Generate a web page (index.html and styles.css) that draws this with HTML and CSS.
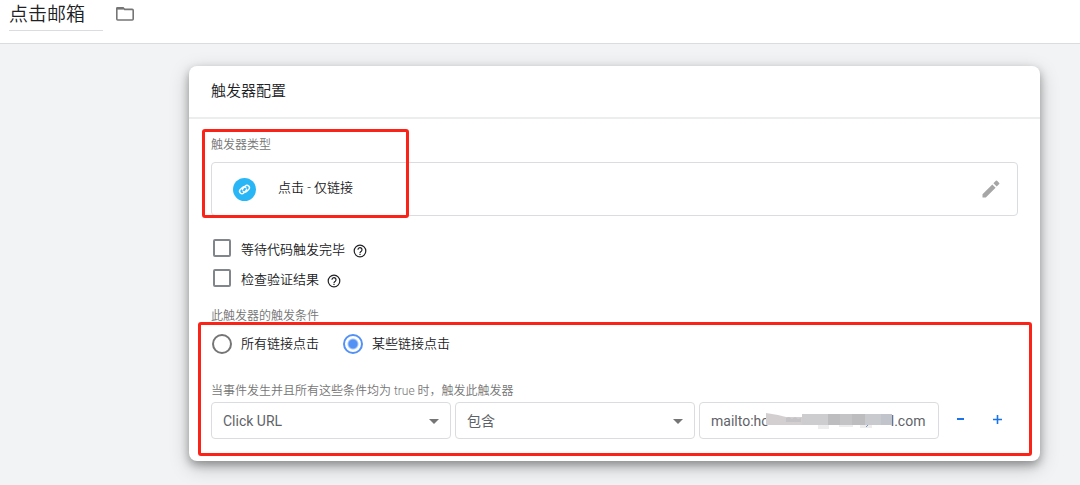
FILE: index.html
```html
<!DOCTYPE html>
<html lang="zh-CN">
<head>
<meta charset="utf-8">
<title>点击邮箱</title>
<link rel="stylesheet" href="styles.css">
</head>
<body>
<header class="topbar">
  <input class="name" type="text" value="点击邮箱" aria-label="触发器名称">
  <button class="icon-btn" type="button" aria-label="文件夹">
    <svg width="20" height="16" viewBox="0 0 20 16" fill="none" stroke="#757575" stroke-width="1.6"><path d="M1.8 2.2V13a1 1 0 0 0 1 1h14.4a1 1 0 0 0 1-1V4.4a1 1 0 0 0-1-1H9.6L8 1.7H2.3z"/><path d="M2 2.6h6.500" stroke-width="2"/></svg>
  </button>
</header>
<main class="stage">
  <section class="card">
    <h1 class="card-title">触发器配置</h1>
    <div class="card-body">
      <div class="type-block">
        <h2 class="caption">触发器类型</h2>
        <div class="type-box">
          <svg class="type-icon" width="23" height="23" viewBox="0 0 23 23"><circle cx="11.5" cy="11.5" r="11.5" fill="#29b6f6"/><g transform="translate(11.5 11.5) rotate(-45)" fill="none" stroke="#fff" stroke-width="1.4" stroke-linecap="round"><path d="M1.600 1.200A2.600 2.600 0 0 1 0 1.900h-3a2.400 2.400 0 0 1 0-4.800h3a2.400 2.400 0 0 1 2.300 2.400M-1.600-1.200A2.600 2.600 0 0 1 0-1.900h3a2.400 2.400 0 0 1 0 4.800H0a2.400 2.400 0 0 1-2.300-2.400"/></g></svg>
          <span class="type-name">点击 - 仅链接</span>
          <button class="icon-btn" type="button" aria-label="修改">
            <svg width="18" height="18" viewBox="0 0 18 18" fill="#a6a6a6"><path d="M.5 14.2v3.3h3.3L13.6 7.700l-3.300-3.300zM17.200 4.100a.9.900 0 0 0 0-1.200L15.100.8a.9.900 0 0 0-1.200 0L11.400 3.300l3.300 3.300z"/></svg>
          </button>
        </div>
        <div class="mark mark-type"></div>
      </div>
      <div class="checks">
        <div class="option">
          <input class="check" type="checkbox" id="wait"><label for="wait">等待代码触发完毕</label>
          <svg class="help" width="14" height="14" viewBox="0 0 14 14" fill="none" stroke="#202124" stroke-width="1.2"><circle cx="7" cy="7" r="5.8"/><path d="M5 5.700a2 2 0 1 1 3.300 1.500C7.500 7.800 7 8 7 8.900M7 9.800v1.200"/></svg>
        </div>
        <div class="option">
          <input class="check" type="checkbox" id="verify"><label for="verify">检查验证结果</label>
          <svg class="help" width="14" height="14" viewBox="0 0 14 14" fill="none" stroke="#202124" stroke-width="1.2"><circle cx="7" cy="7" r="5.8"/><path d="M5 5.700a2 2 0 1 1 3.300 1.500C7.500 7.800 7 8 7 8.900M7 9.800v1.200"/></svg>
        </div>
      </div>
      <h2 class="caption">此触发器的触发条件</h2>
      <div class="fire-block">
        <div class="radios">
          <div class="option"><input class="radio" type="radio" name="fire" id="all"><label for="all">所有链接点击</label></div>
          <div class="option"><input class="radio" type="radio" name="fire" id="some" checked><label for="some">某些链接点击</label></div>
        </div>
        <p class="caption">当事件发生并且所有这些条件均为 true 时，触发此触发器</p>
        <div class="condition">
          <div class="select-wrap"><select class="field" aria-label="变量"><option>Click URL</option></select></div>
          <div class="select-wrap"><select class="field" aria-label="运算符"><option>包含</option></select></div>
          <div class="value-wrap">
            <input class="field" type="text" aria-label="值" value="mailto:ho                                   l.com">
            <svg class="mosaic" width="132" height="18" viewBox="0 0 132 18">
              <path d="M0 0l12 2 8 2h16v8H0z" fill="#d3cfd1"/>
              <path d="M20 5l3-1 3 2 3-2 3 2 3-1v4H20z" fill="#c6c3c7"/>
              <path d="M36 1h26v11H36z" fill="#cdcdd0"/>
              <path d="M62 1h37v11H62z" fill="#bdbdc0"/>
              <path d="M74 1h12v11H74z" fill="#c4c4c6"/>
              <path d="M99 1h27v11H99z" fill="#c9cacd"/>
              <path d="M115 1h11v11h-11z" fill="#c1c4ca"/>
              <path d="M52 12h11v4H52zM73 12h14v2H73zM94 12h12v3H94z" fill="#ededee"/>
              <path d="M100 14l2-2" stroke="#7895bd"/>
            </svg>
          </div>
          <button class="step" type="button" aria-label="删除条件"><svg width="9" height="9" viewBox="0 0 9 9"><path d="M1 4h7" stroke="#1a73e8" stroke-width="2"/></svg></button>
          <button class="step" type="button" aria-label="添加条件"><svg width="9" height="9" viewBox="0 0 9 9"><path d="M0 4.500h9M4.500 0v9" stroke="#1a73e8" stroke-width="1.6"/></svg></button>
        </div>
        <div class="mark mark-fire"></div>
      </div>
    </div>
  </section>
</main>
</body>
</html>
```
FILE: styles.css
```css
* { box-sizing: border-box; }
body {
  margin: 0;
  min-height: 100vh;
  background: #f1f3f4;
  color: #202124;
  font-family: Roboto, "Noto Sans CJK SC", sans-serif;
  font-size: 13px;
  font-weight: 350;
}
h1, h2, p { margin: 0; font-weight: 350; }
input, select, button { font-family: inherit; color: inherit; margin: 0; }
svg { display: block; flex: none; }
.topbar {
  display: flex;
  align-items: flex-start;
  gap: 12px;
  height: 44px;
  padding: 0 9px;
  background: #fff;
  border-bottom: 1px solid #dadce0;
}
.name {
  width: 94px;
  height: 31px;
  padding: 0 0 5px;
  border: 0;
  border-bottom: 1px solid #dadce0;
  background: none;
  font-size: 19px;
  font-weight: 350;
}
.icon-btn { padding: 0; border: 0; background: none; cursor: pointer; }
.topbar .icon-btn { padding-top: 6px; }
.stage { padding: 22px 40px 24px 189px; }
.card {
  background: #fff;
  border-radius: 8px;
  box-shadow: 0 4px 8px rgba(0, 0, 0, .3), 0 6px 20px rgba(0, 0, 0, .22);
}
.card-title {
  height: 53px;
  padding: 0 22px;
  border-bottom: 2px solid #eceded;
  font-size: 15px;
  line-height: 50px;
}
.card-body { padding: 18px 22px 22px; }
.caption {
  color: #757575;
  font-size: 12px;
  line-height: 16px;
}
.type-block, .fire-block { position: relative; }
.type-box {
  display: flex;
  align-items: center;
  height: 54px;
  margin-top: 9px;
  padding: 0 17px 0 21px;
  border: 1px solid #dadce0;
  border-radius: 4px;
}
.type-name { flex: 1; margin-left: 22px; line-height: 20px; padding-bottom: 2px; }
.mark {
  position: absolute;
  border: 3px solid #fb2318;
  border-radius: 3px;
  pointer-events: none;
}
.mark-type { left: -9px; top: -8px; width: 207px; bottom: -2px; }
.mark-fire { left: -13px; right: -14px; top: -2px; bottom: -17px; }
.checks { margin: 17px 0 15px; }
.option { display: flex; align-items: center; height: 30px; }
.option label { line-height: 20px; padding-top: 4px; }
.radios .option label { padding-top: 0; }
.check {
  appearance: none;
  width: 18px;
  height: 18px;
  margin: 0 10px 0 2px;
  border: 2px solid #80868b;
  border-radius: 2px;
}
.help { margin: 5px 0 0 8px; }
.radios { display: flex; gap: 23px; padding-top: 5px; margin-bottom: 24px; }
.radio {
  appearance: none;
  width: 20px;
  height: 20px;
  margin: 0 9px 0 1px;
  border: 2px solid #757575;
  border-radius: 50%;
}
.radio:checked {
  border-color: #5491f5;
  background: radial-gradient(circle, #5491f5 4px, #fff 6px);
}
.condition {
  display: grid;
  grid-template-columns: 1fr 1fr 1fr 34px 32px;
  column-gap: 4px;
  align-items: center;
  margin-top: 3px;
  padding-right: 5px;
}
.select-wrap, .value-wrap { position: relative; }
.field {
  display: block;
  appearance: none;
  width: 100%;
  height: 37px;
  padding: 0 11px;
  border: 1px solid #dadce0;
  border-radius: 4px;
  background: #fff;
  color: #5f6368;
  font-size: 14px;
}
.value-wrap .field { padding-right: 4px; }
.select-wrap::after {
  content: "";
  position: absolute;
  right: 12px;
  top: 17px;
  border: 5px solid transparent;
  border-top-color: #757575;
  border-bottom: 0;
}
.mosaic { position: absolute; left: 67px; top: 11px; }
.step {
  display: flex;
  align-items: center;
  justify-content: center;
  height: 34px;
  padding: 0 0 2px;
  border: 0;
  background: none;
  cursor: pointer;
}
```
